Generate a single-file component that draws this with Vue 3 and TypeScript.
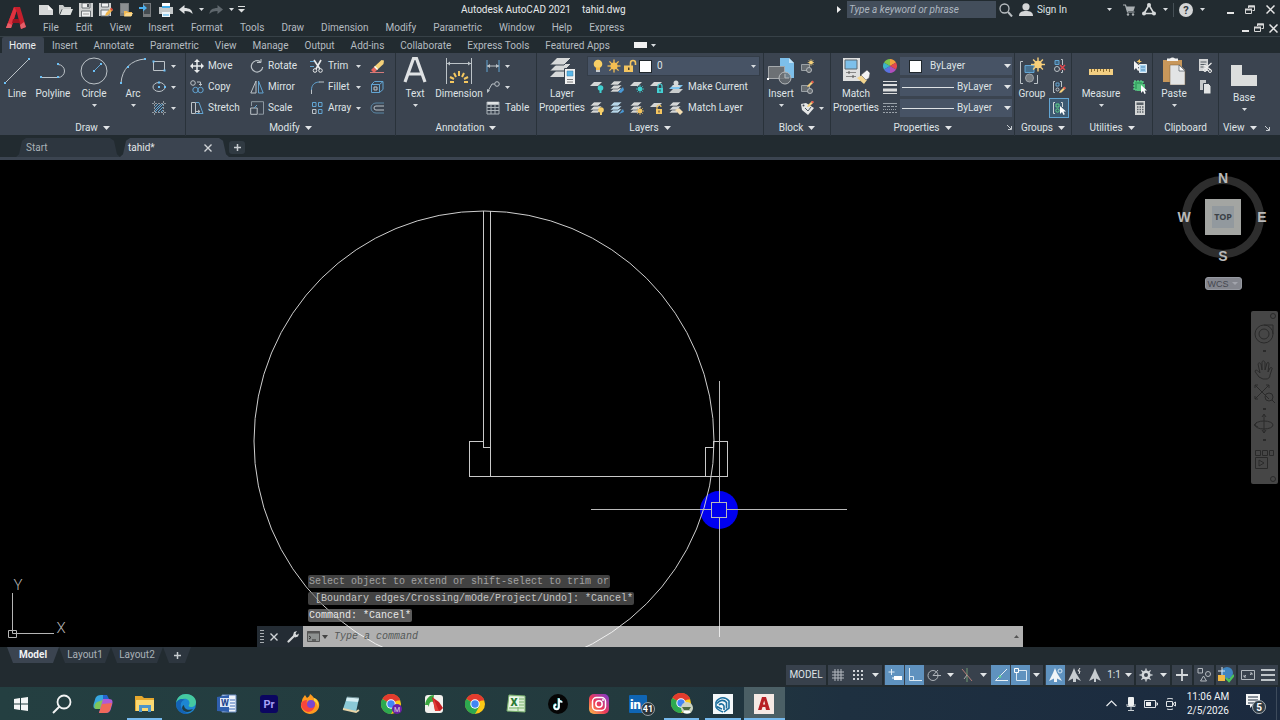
<script setup lang="ts">
import { h, ref } from 'vue'

const L = '#bcc3c8'
const B = '#62a5d3'
const dot = (x: number, y: number) => `<rect x="${x - 1}" y="${y - 1}" width="2" height="2" fill="#6cc0f5"/>`
const sheet = (x: number, y: number, c = '#d4d6d6') => `<path d="M${x + 4} ${y}h8l-4 4h-8z" fill="${c}"/>`
const stack = (c = '#d4d6d6') => `<g stroke="#3b444f" stroke-width=".6">${sheet(0, 8, c)}${sheet(0, 5, c)}${sheet(0, 1, c)}</g>`
const bulb = (x: number, y: number, c: string) => `<circle cx="${x}" cy="${y}" r="2.8" fill="${c}"/><path d="M${x - 1} ${y + 2}h2v3h-2z" fill="${c}"/>`
const padlock = (x: number, y: number, c: string, open = false) =>
  `<path d="M${x + 1} ${y + 3}v-2a2 2 0 0 1 4 0v${open ? 0 : 2}" fill="none" stroke="${c}" stroke-width="1.2"/><rect x="${x}" y="${y + 3}" width="6" height="5" fill="${c}"/><rect x="${x + 2.5}" y="${y + 4.5}" width="1" height="2" fill="#333"/>`
const rays = (x: number, y: number, r: number, c: string) => {
  let s = `<circle cx="${x}" cy="${y}" r="${r * 0.55}" fill="${c}"/>`
  for (let i = 0; i < 8; i++) {
    const a = (i * Math.PI) / 4
    s += `<path d="M${x} ${y}L${(x + r * Math.cos(a)).toFixed(1)} ${(y + r * Math.sin(a)).toFixed(1)}" stroke="${c}" stroke-width="${(r / 5).toFixed(1)}"/>`
  }
  return s
}
const pencil = (x: number, y: number) => `<path d="M${x} ${y + 6}l1-2 4-4 1.500 1.500-4 4z" fill="#f3cf7d"/><path d="M${x + 4} ${y + 1}l1.500-1.500 1.500 1.500-1.500 1.500z" fill="#e65a4d"/>`
const chrome = `<circle cx="10" cy="10" r="10" fill="#fbc916"/><path d="M10 10L1.300 5A10 10 0 0 1 18.700 5z" fill="#e33b2e"/><path d="M10 10L1.300 5A10 10 0 0 0 10 20l4.500-8z" fill="#2da94f"/><path d="M10 5.500h8.900" stroke="#e33b2e" stroke-width="2"/><circle cx="10" cy="10" r="4.700" fill="#fff"/><circle cx="10" cy="10" r="3.700" fill="#4285f4"/>`

const icons: Record<string, [number, number, string]> = {
  logo: [22, 26, '<path d="M1 23L9 2h6l6 20-5 2-1.500-6H8L6 23z" fill="#c51f2c"/><path d="M9 14l2.500-8 2 8z" fill="#212a2f"/><path d="M1 23L9 2l2.500 4L6 23z" fill="#e0323f"/><path d="M8 14h6l1 4H7z" fill="#9c1421"/><path d="M1 23l2-5 4 2-1 3zM15 20l4-3 2 5-5 2z" fill="#e4606a"/>'],
  caret: [5, 3, '<path d="M0 0h5L2.500 3z" fill="#d8dcdf"/>'],
  caretBig: [7, 4, '<path d="M0 0h7L3.500 4z" fill="#e2e5e7"/>'],
  newFile: [14, 12, '<path d="M0 1h9l5 5v5H0z" fill="#d6d8d8"/><path d="M9 1v5h5z" fill="#f5f5f5"/>'],
  open: [14, 12, '<path d="M0 1h4l1.500 2H12v2H3L0 11z" fill="#c9cccb"/><path d="M3.500 5H14l-2.500 6H1z" fill="#dfe1e0"/>'],
  save: [14, 14, '<path d="M0 0h14v14H0z" fill="#cfd1d1"/><path d="M3 0h8v5H3zM2.500 8h9v6h-9z" fill="#f0f1f1" stroke="#6b7074"/><path d="M8 1h2v3H8z" fill="#565b5f"/><path d="M4 11h6" stroke="#999"/>'],
  saveAs: [14, 14, '<path d="M0 0h12v13H0z" fill="#cfd1d1"/><path d="M2.500 0h7v4h-7zM2 7h8v6H2z" fill="#f0f1f1" stroke="#6b7074"/><path d="M6 13l1-3 5-5 2 2-5 5z" fill="#f0b64c"/><path d="M11 6l1.500-1.500L14 6.500 13 8z" fill="#d8463c"/>'],
  device: [14, 14, '<path d="M1 0h9v13H1z" fill="#777b7e"/><path d="M2 1h7v9H2z" fill="#8b8f91"/><path d="M5 8h3l1 1h4v4H5z" fill="#f1b955"/><path d="M7 10h7l-2 3.500H5z" fill="#fbd98d"/>'],
  cloud: [14, 14, '<path d="M4 0h8v14H4z" fill="#777b7e"/><path d="M5 1h6v10H5z" fill="#444b50"/><path d="M0 4h4V1.500L8 5 4 8.500V6H0z" fill="#4cb0ee"/>'],
  print: [14, 14, '<path d="M3 0h8v4H3z" fill="#fff"/><path d="M0 4h14v7H0z" fill="#c4c8c9"/><path d="M3 3h8v2H3z" fill="#40a9e6"/><path d="M3 9h8v5H3z" fill="#eef6fa"/><path d="M4 12h6" stroke="#40a9e6"/>'],
  undo: [14, 10, '<path d="M0 4.500L5.500 0v3c5 0 8 2 8 6-1.500-2-4-3-8-3v3z" fill="#dfe1e2"/>'],
  redo: [14, 10, '<path d="M14 4.500L8.500 0v3c-5 0-8 2-8 6 1.500-2 4-3 8-3v3z" fill="#5f676d"/>'],
  custom: [7, 7, '<path d="M0 .5h7" stroke="#dfe1e2"/><path d="M0 3h7L3.500 6.500z" fill="#dfe1e2"/>'],
  arrowR: [4, 7, '<path d="M0 0v7l4-3.500z" fill="#eee"/>'],
  magnify: [14, 14, '<circle cx="5.500" cy="5.500" r="4.500" fill="none" stroke="#b8bdc0" stroke-width="1.300"/><path d="M9 9l4 4.500" stroke="#b8bdc0" stroke-width="2"/>'],
  person: [14, 13, '<circle cx="7" cy="3.800" r="3.600" fill="#d4d6d7"/><path d="M0 13c0-4 3-5 7-5s7 1 7 5z" fill="#d4d6d7"/>'],
  cart: [13, 12, '<path d="M0 1h2.500l2 7h7" fill="none" stroke="#a9afb2" stroke-width="1.200"/><path d="M3 2.500h9L10.500 7H4.200z" fill="#a9afb2"/><circle cx="5" cy="10.500" r="1.200" fill="#a9afb2"/><circle cx="10" cy="10.500" r="1.200" fill="#a9afb2"/>'],
  appA: [14, 13, '<path d="M7 2L2 10.500h10z" fill="none" stroke="#d7dadb" stroke-width="1.600"/><circle cx="7" cy="2" r="2" fill="#d7dadb"/><circle cx="2" cy="10.500" r="2" fill="#d7dadb"/><circle cx="12" cy="10.500" r="2" fill="#d7dadb"/>'],
  help: [14, 14, '<circle cx="7" cy="7" r="7" fill="#d3d5d6"/><text x="7" y="11" text-anchor="middle" font-family="Roboto" font-weight="700" font-size="11" fill="#30383d">?</text>'],
  min: [7, 8, '<path d="M0 7h7" stroke="#e6e6e6" stroke-width="2"/>'],
  restore: [10, 10, '<path d="M3.500 3V1h6v4.500h-2" fill="none" stroke="#d8d8d8"/><path d="M3 1.500h7" stroke="#d8d8d8" stroke-width="2"/><path d="M.5 4.500h6v4h-6z" fill="none" stroke="#d8d8d8"/><path d="M0 4.500h7" stroke="#d8d8d8" stroke-width="2"/>'],
  close: [9, 9, '<path d="M.5.5l8 8m0-8l-8 8" stroke="#e6e6e6" stroke-width="1.500"/>'],
  closeSm: [8, 8, '<path d="M.5.5l7 7m0-7l-7 7" stroke="#d0d4d7" stroke-width="1.400"/>'],
  plus: [7, 7, '<path d="M3.500 0v7M0 3.500h7" stroke="#c7ccd0" stroke-width="1.500"/>'],
  line: [28, 28, `<path d="M1.500 26.500l25-25" stroke="${L}"/>${dot(2, 26)}${dot(26, 2)}`],
  polyline: [28, 28, `<path d="M2 20.500h17a6.500 6.500 0 0 0 0-13" fill="none" stroke="${L}"/>${dot(2, 20)}${dot(19, 20)}${dot(19, 7)}`],
  circle: [28, 28, `<circle cx="14" cy="14" r="13" fill="none" stroke="${L}"/><path d="M14 14l7-7" stroke="${B}"/>${dot(14, 14)}${dot(21, 7)}`],
  arc: [28, 28, `<path d="M2 26C3 12 12 3 26 2" fill="none" stroke="${L}"/>${dot(2, 26)}${dot(9, 10)}${dot(26, 2)}`],
  rect: [14, 14, `<path d="M1.500 2.500h11v9h-11z" fill="none" stroke="${L}"/>${dot(1.5, 2.5)}${dot(12.5, 11.5)}`],
  ellipse: [14, 14, `<ellipse cx="7" cy="7" rx="6" ry="4.500" fill="none" stroke="${L}"/>${dot(7, 7)}${dot(13, 7)}${dot(7, 2.5)}`],
  hatch: [14, 14, `<path d="M2.500 0v14M11.500 0v14M0 2.500h14M0 11.500h14" stroke="#8f989f" stroke-dasharray="2 1"/><path d="M3 6l3-3M3 9l6-6M3 11l8-8M6 11l5-5M9 11l2-2" stroke="${B}"/>`],
  move: [14, 14, '<path d="M7 1v12M1 7h12" stroke="#e8eaeb" stroke-width="1.500"/><path d="M7 0l3 3H4zM7 14l3-3H4zM0 7l3-3v6zM14 7l-3-3v6z" fill="#e8eaeb"/>'],
  copy: [14, 14, `<circle cx="3" cy="3" r="2.300" fill="none" stroke="${L}"/><path d="M7 2h3.500v3M9 4l1.500 1.500L12 4" fill="none" stroke="${L}"/><circle cx="5.500" cy="10" r="2.700" fill="none" stroke="${B}"/><circle cx="10.500" cy="10" r="2.700" fill="none" stroke="${B}"/>`],
  stretch: [14, 14, `<path d="M1.500 1.500h4v11h-4z" fill="none" stroke="${L}"/><path d="M6 1.500h3l4 11H6" fill="none" stroke="${B}"/><path d="M5 10.500h5M8 9l2 1.500L8 12" fill="none" stroke="${L}"/>`],
  rotate: [14, 14, `<path d="M10.500 2.800A5.700 5.700 0 1 0 12.700 8" fill="none" stroke="${L}" stroke-width="1.200"/><path d="M7 3.500h4V0" fill="none" stroke="${L}"/>`],
  mirror: [14, 14, `<path d="M6 1v12H.8z" fill="none" stroke="${L}"/><path d="M8.500 1v12h4.700z" fill="none" stroke="${B}"/>`],
  scale: [14, 14, `<path d="M1.500 5V.7h12v12.500H8.500" fill="none" stroke="#8d98a1"/><path d="M.7 7h6.500v6.300H.7z" fill="none" stroke="${L}"/><path d="M4 7l3-3" stroke="${B}"/>`],
  trim: [14, 14, '<path d="M0 2.500h4M0 7.500h4" stroke="#62a5d3"/><path d="M4 1l6 9M11 1L6 10" stroke="#e8eaeb" stroke-width="1.600"/><circle cx="5" cy="11.500" r="1.800" fill="none" stroke="#e8eaeb"/><circle cx="10.500" cy="11.500" r="1.800" fill="none" stroke="#e8eaeb"/>'],
  fillet: [14, 14, `<path d="M1.500 14V9" stroke="${L}"/><path d="M1.500 10c0-5 3-8 8-8" fill="none" stroke="${B}"/><path d="M9 2h5" stroke="${L}"/>`],
  array: [14, 14, `<g fill="none" stroke="${B}"><path d="M2.500 1.500h3.500v4H2.500zM8.500 1.500H12v4H8.500zM8.500 8.500H12v4H8.500z"/><path d="M2.500 8.500h3.500v4H2.500z" stroke="${L}"/></g>`],
  erase: [14, 14, '<path d="M0 13.500h14" stroke="#d47b7b"/><path d="M4 8L11.500 1 14 1.500 13.500 5 7 11z" fill="#f4d179"/><path d="M1 11l3-3 3 3-2 2H3z" fill="#e5655d"/><path d="M4 8l3 3 1-1-3-3z" fill="#fff"/>'],
  explode: [14, 14, '<path d="M1.500 4.500h8v8h-8zM1.500 4.500l3-3h8.500l-3.500 3M13 1.500v8l-3.500 3" fill="none" stroke="#62a5d3"/><path d="M4 7h3v3H4z" fill="none" stroke="#bcc3c8"/>'],
  offset: [14, 14, '<path d="M14 2H6a5 5 0 0 0 0 10h8" fill="none" stroke="#5b87a5"/><path d="M14 5H6a2 2 0 0 0 0 4h8" fill="none" stroke="#bcc3c8"/>'],
  text: [24, 26, '<path d="M2 25L10.500 1.500h3L22 25M5.500 17h13" fill="none" stroke="#dfe2e4" stroke-width="3.200"/>'],
  dimension: [28, 28, '<path d="M1.500 1v26M26.500 1v26M1.500 6.500h25" stroke="#bcc3c8"/><path d="M2 6.500l3-2v4zM26 6.500l-3-2v4z" fill="#bcc3c8"/><g stroke="#f4c760" stroke-width="2"><path d="M14 14v5M9 16l2 4M19 16l-2 4M5 20l4 2M23 20l-4 2M5 25h4M23 25h-4"/></g>'],
  dimLinear: [14, 14, '<path d="M1 1v12M13 1v12" stroke="#62a5d3"/><path d="M1 7h12" stroke="#bcc3c8"/><path d="M1 7l3-2v4zM13 7l-3-2v4z" fill="#bcc3c8"/>'],
  leader: [14, 14, '<circle cx="11" cy="4" r="2.300" fill="none" stroke="#bcc3c8"/><path d="M8.500 4H6l-4.500 8" fill="none" stroke="#bcc3c8"/><path d="M1 13v-4l3 1.500z" fill="#bcc3c8"/>'],
  table: [14, 14, '<path d="M1 1.500h12M1 3h12" stroke="#e0e3e5" stroke-width="1.500"/><path d="M1 1v12h12V1M1 6.500h12M1 9.500h12M5 4v9M9 4v9" fill="none" stroke="#aab2b8"/>'],
  layerProps: [28, 28, '<g fill="#d7d9d9"><path d="M9 1h14l-7 7H2zM9 7h14l-7 7H2z"/><path d="M9 13h14l-7 7H2z"/></g><path d="M2 8h14l7-7M2 14h14l7-7" fill="none" stroke="#3b444f"/><path d="M16.500 11.500h11v16h-11z" fill="#f1f1f1" stroke="#3b444f"/><path d="M19 14h6v5h-6z" fill="#5ab7e9" stroke="#3b7fa3" stroke-width=".5"/><path d="M19 22.500h6M19 25h6" stroke="#777"/>'],
  bulbOn: [14, 14, '<circle cx="7" cy="5" r="4.300" fill="#f8cf66"/><path d="M5 8.500h4V11H5z" fill="#f3ba45"/><path d="M5 12h4" stroke="#c8ccd0" stroke-width="2"/>'],
  sun: [14, 14, rays(7, 7, 6.5, '#f4bf52')],
  unlock: [14, 14, '<path d="M7.500 7V4a2.500 2.500 0 0 1 5 0v2" fill="none" stroke="#f4c560" stroke-width="1.600"/><path d="M1 6.500h9V13H1z" fill="#f4c560"/><path d="M5 8.500h1.500v2.500H5z" fill="#453c2b"/>'],
  layA: [14, 14, sheet(0, 2) + bulb(10.5, 8, '#40cfd0')],
  layB: [14, 14, stack() + '<path d="M8 12l5-5 1 3-3 3z" fill="#4a9ad6"/>'],
  layC: [14, 14, sheet(0, 2) + rays(10, 9, 4, '#40cfd0')],
  layD: [14, 14, sheet(0, 2) + padlock(7, 5, '#44d0d4')],
  layE: [14, 14, '<path d="M4 5h10l-4 4H0z" fill="#7fc4ee"/><path d="M4 9h10l-4 4H0z" fill="#c9cccc"/><circle cx="7" cy="3" r="2.500" fill="#d7d9d9"/><path d="M3 7a4 2.500 0 0 1 8 0z" fill="#d7d9d9"/>'],
  layF: [14, 14, stack() + bulb(11, 9, '#f7cf69')],
  layG: [14, 14, stack('#b7d6e8') + '<path d="M9 13l4-5 1 3z" fill="#4a9ad6"/>'],
  layH: [14, 14, stack() + rays(10, 10, 4, '#f4c560')],
  layI: [14, 14, sheet(0, 2) + padlock(6, 5, '#f4c560', true)],
  layJ: [14, 14, stack() + '<path d="M6 9l4-2 4 4-3 3z" fill="#f3ddb1"/>'],
  insert: [28, 28, '<path d="M13 1h9l5 5v15H13z" fill="#7dbfea"/><path d="M22 1v5h5z" fill="#c4e4f8"/><path d="M1.500 9.500h16v12h-16z" fill="#6c7074" stroke="#a5a9ac"/><circle cx="18" cy="21" r="6" fill="#6c7074" fill-opacity=".8" stroke="#b5b9bc"/><path d="M18 17v4h4" fill="none" stroke="#b5b9bc"/><path d="M0 21h2v2H0z" fill="#fff"/>'],
  blkNew: [14, 14, '<path d="M1.500 5.500h8v6h-8z" fill="#666c71" stroke="#9aa1a6"/><circle cx="9" cy="11" r="2.500" fill="#666c71" stroke="#b5b9bc"/>' + rays(11, 3.5, 3.3, '#f6d27d')],
  blkEdit: [14, 14, '<path d="M1.500 5.500h8v6h-8z" fill="#666c71" stroke="#9aa1a6"/><circle cx="10" cy="11" r="2.500" fill="#666c71" stroke="#b5b9bc"/>' + pencil(7, 1)],
  blkAttr: [14, 14, '<path d="M1 3l5-1 8 5-6 7-6-5z" fill="#e4e6e6"/><path d="M5 7l3 3 3-4" fill="none" stroke="#4e5861"/><circle cx="3.500" cy="4.500" r="1" fill="#3b4450"/>' + pencil(7, 0)],
  match: [28, 28, '<path d="M1 1h17v23H1z" fill="#dfe0e0"/><path d="M3 3h12v9H3z" fill="#7dc0ea" stroke="#5d666c"/><path d="M4 15.500h10M4 19.500h10" stroke="#888"/><path d="M7 14v3M11 18v3" stroke="#555"/><path d="M15 21l5-3 5 5-3 4z" fill="#f3d58f"/><path d="M19 18l6-5 3 3-1 5-3 2z" fill="#f3f3f3" stroke="#555" stroke-width=".5"/>'],
  wheel: [14, 14, '<path d="M7 7V0A7 7 0 0 1 13 3.500z" fill="#f2a03c"/><path d="M7 7l6-3.500A7 7 0 0 1 13 10.500z" fill="#e5484e"/><path d="M7 7l6 3.500A7 7 0 0 1 7 14z" fill="#b04fbd"/><path d="M7 7v7A7 7 0 0 1 1 10.500z" fill="#5b72e0"/><path d="M7 7l-6 3.500A7 7 0 0 1 1 3.500z" fill="#3bb4c9"/><path d="M7 7L1 3.500A7 7 0 0 1 7 0z" fill="#7ec54b"/>'],
  weights: [14, 14, '<path d="M0 1.500h14" stroke="#ddd"/><path d="M0 5h14" stroke="#ddd" stroke-width="2"/><path d="M0 10h14" stroke="#ddd" stroke-width="3"/><path d="M0 13.500h14" stroke="#ddd"/>'],
  types: [14, 14, '<path d="M0 2.500h14" stroke="#9aa2a9"/><path d="M0 5.500h14" stroke="#9aa2a9" stroke-dasharray="3 1"/><path d="M0 8.500h14" stroke="#9aa2a9" stroke-dasharray="1 1"/><path d="M0 11.500h14" stroke="#9aa2a9" stroke-dasharray="2 1"/>'],
  launch: [5, 5, '<path d="M0 0l4 4M4.500 1v3.500H1" fill="none" stroke="#c6cbcf"/>'],
  group: [28, 28, `<path d="M5 4.500H2.500v22H5M16 26.500h3.500V18" fill="none" stroke="${L}"/><path d="M7 8.500h9v7H7z" fill="#47708f" stroke="#62a5d3"/><circle cx="11.500" cy="21" r="4" fill="#777d82" stroke="#9da3a8"/>${rays(20, 7.5, 7, '#f8cf7a')}`],
  ungroup: [14, 14, `<path d="M3 1.500h4v4H3z" fill="#3f6582" stroke="#62a5d3"/><circle cx="5" cy="10" r="2.500" fill="none" stroke="${L}"/><path d="M9 .5h1.500V6M9 13.500h1.500V11" fill="none" stroke="${L}"/><path d="M8 6l5 5m0-5l-5 5" stroke="#e4474f" stroke-width="1.500"/>`],
  groupEdit: [14, 14, `<path d="M3 1.500H1.500v11H3M8 1.500h1.500V7" fill="none" stroke="${L}"/><path d="M4 3h3v3H4z" fill="none" stroke="#62a5d3"/><circle cx="5.500" cy="9.500" r="1.500" fill="none" stroke="${L}"/>${pencil(7, 7)}`],
  groupSel: [14, 14, '<path d="M3 1.500H1.500v11H3M9 1.500h1.500V6" fill="none" stroke="#cfd6d8"/><path d="M4 3h3v3H4z" fill="none" stroke="#5fd48b"/><circle cx="5.500" cy="9.500" r="1.700" fill="none" stroke="#5fd48b"/><path d="M8 5v8l2-2 1.500 3 1.300-.7L11.500 10.500H14z" fill="#fff"/>'],
  ruler: [26, 28, '<path d="M1 12h24v6H1z" fill="#f3cf82"/><path d="M3.500 12v3M6.500 12v2M9.500 12v3M12.500 12v2M15.500 12v3M18.500 12v2M21.500 12v3" stroke="#8a6b2d"/>'],
  quickSel: [14, 14, '<path d="M1 2v9l2-2 2 3 1.500-1L5 8h3z" fill="#f2f2f2"/><path d="M7 0L3.500 3H6L5 5l4-3H7z" fill="#f4c560"/><path d="M6.500 5.500h7v8h-7z" fill="#a8d4f2" stroke="#e6eef3"/><path d="M8 8h4M8 11h4" stroke="#4e8ab5"/>'],
  selAll: [14, 14, '<path d="M1 1h9v9H1z" fill="#3ba766" stroke="#6be79a" stroke-dasharray="2 1"/><path d="M4 4h8v7H4z" fill="#54c27e"/><path d="M8 5v8l2-2 1.500 3 1.300-.7-1.300-2.800H14z" fill="#fff"/>'],
  calc: [14, 14, '<path d="M2 0h10v14H2z" fill="#d4d6d6"/><path d="M3.500 1.500h7v2.500h-7z" fill="#596168"/><path d="M4 6h6.500M4 8.500h6.500M4 11h6.500" stroke="#596168" stroke-width="1.500" stroke-dasharray="1.500 1"/>'],
  paste: [28, 28, '<path d="M3 3h19v22H3z" fill="#c8975a"/><path d="M7 4V1.500h3a3 2 0 0 1 5 0h3V4z" fill="#f1f1f1"/><path d="M10 8h10l5 5v15H10z" fill="#e2e4e5" stroke="#7b5d3a" stroke-width=".5"/><path d="M19 8v6h6z" fill="#fff" stroke="#4b545c" stroke-width=".7"/>'],
  cut: [14, 14, '<path d="M1 0h9v12H1z" fill="#d3d5d6"/><path d="M2.500 3h6M2.500 5.500h5M2.500 8h3" stroke="#555d64"/><path d="M13.500 4L7 10M6 6l7 5" stroke="#eee" stroke-width="1.200"/><circle cx="7" cy="11" r="1.500" fill="none" stroke="#eee"/><circle cx="12" cy="12" r="1.500" fill="none" stroke="#eee"/>'],
  copyClip: [14, 14, '<path d="M2 0h6v10H2z" fill="#c6c9ca"/><path d="M5.500 3.500h5l2.500 2.500v8H5.500z" fill="#e2e4e4" stroke="#3b444f"/>'],
  base: [28, 28, '<path d="M1 4h11v10h15v11H1z" fill="#dcdedd"/>'],
  wrench: [12, 12, '<path d="M1.500 10.500L7 5" stroke="#d6d9da" stroke-width="2.200" stroke-linecap="round"/><path d="M6 4.500L7 1l3-1-1.500 2.500L9.500 4 12 2.500 11 5.500 8 6.500z" fill="#d6d9da"/>'],
  prompt: [14, 12, '<path d="M.5.5h12v10H.5z" fill="#8d9190" stroke="#555"/><path d="M0 1.500h13" stroke="#555" stroke-width="2"/><path d="M2 5l2 1.500L2 8M5 9h4" fill="none" stroke="#333"/>'],
  caretDark: [6, 4, '<path d="M0 0h6L3 4z" fill="#444"/>'],
  caretUp: [5, 3, '<path d="M0 3h5L2.500 0z" fill="#555"/>'],
  grid: [14, 14, '<path d="M4 1v12M7 1v12M10 1v12M1 4h12M1 7h12M1 10h12" stroke="#b4bac0"/>'],
  snap: [14, 14, '<g fill="#d0d4d8"><path d="M2 2h2v2H2zM6 2h2v2H6zM10 2h2v2h-2zM2 6h2v2H2zM6 6h2v2H6zM10 6h2v2h-2zM2 10h2v2H2zM6 10h2v2H6zM10 10h2v2h-2z"/></g>'],
  dyn: [14, 14, '<path d="M3.500 1v6M.5 4h6" stroke="#e3edf5"/><path d="M6 8h8v4H6z" fill="#fff"/><path d="M4 10h2" stroke="#fff"/>'],
  ortho: [14, 14, '<path d="M1.500 0v12.500H14M1.500 8.500h4v4" fill="none" stroke="#dce9f3"/>'],
  polar: [14, 14, '<circle cx="6" cy="7.500" r="5" fill="none" stroke="#aeb4ba"/><path d="M6 7.500h8M6 7.500L11 2" stroke="#aeb4ba"/>'],
  iso: [14, 14, '<path d="M7 0v14" stroke="#6f9a72"/><path d="M2 1l10 12" stroke="#b27d76"/><path d="M7 7l-3 4" stroke="#aaa"/>'],
  track: [14, 14, '<path d="M13 1L1.500 12.500H14" fill="none" stroke="#e8f0f6"/><path d="M5 8l2 1" stroke="#5fdb8b" stroke-width="2"/>'],
  osnap: [14, 14, '<path d="M2.500 2.500h10v10h-10z" fill="none" stroke="#dce9f3"/><path d="M.5.5h4v4h-4z" fill="#6293bf" stroke="#fff"/>'],
  anno: [14, 14, '<path d="M6 0l2 5 5 8-5-2.500V14H5v-3.500L0 13l4-8z" fill="#f0f4f7"/><circle cx="11" cy="3" r="2" fill="none" stroke="#d6e6f2"/>'],
  annoB: [14, 14, '<path d="M6 0l2 5 5 8-5-2.500V14H5v-3.500L0 13l4-8z" fill="#c7ccd0"/><path d="M12 0l-2 3h2l-1 3" fill="none" stroke="#e5e5e5"/>'],
  annoC: [14, 14, '<path d="M7 0l2 5 4 8-5-2.500V14H6v-3.500L1 13l4-8z" fill="#c7ccd0"/>'],
  gear: [14, 14, rays(7, 7, 6.5, '#d4d8db') + '<circle cx="7" cy="7" r="4.500" fill="#d4d8db"/><circle cx="7" cy="7" r="2" fill="#39424c"/>'],
  plusBig: [14, 14, '<path d="M7 1v12M1 7h12" stroke="#d4d8db" stroke-width="1.800"/>'],
  shapes: [14, 14, '<path d="M1 .5h4.500V5H1zM6.500 8l3 5h-6z" fill="none" stroke="#b3b9be"/><circle cx="11" cy="6" r="2.500" fill="none" stroke="#b3b9be"/>'],
  graphics: [16, 16, '<circle cx="9" cy="6" r="6" fill="#3f84bf"/><path d="M0 8h7v6H0z" fill="#f1b944"/><path d="M4 0v8M0 4h7" stroke="#d8e7f2"/><path d="M8 11l3 3 5-6" fill="none" stroke="#4cc35b" stroke-width="2.200"/>'],
  clean: [14, 14, '<path d="M.5 2.500h13v9H.5z" fill="none" stroke="#b3b9be"/><path d="M3 9l2-2M3 7v2h2M11 5L9 7M9 5h2v2" fill="none" stroke="#b3b9be"/>'],
  burger: [14, 14, '<path d="M0 2h14M0 7h14M0 12h14" stroke="#bfc5c9" stroke-width="2"/>'],
  win: [16, 16, '<path d="M1 3l6-1v5.500H1zM8 2l7-1v6.500H8zM1 8.500h6V14l-6-1zM8 8.500h7V15l-7-1z" fill="#f4f6f6"/>'],
  find: [20, 20, '<circle cx="12" cy="8" r="6.500" fill="none" stroke="#f2f4f4" stroke-width="1.800"/><path d="M7.500 12.500L1 19" stroke="#f2f4f4" stroke-width="2"/>'],
  copilot: [20, 20, '<path d="M8 1h6l-4 14H4c-4 0-4-3-3-6l1.500-5C3.500 2 5 1 8 1z" fill="#37a7e0"/><path d="M4 8l9-3-3 10H4c-3 0-3-2-2-5z" fill="#7fc65a"/><path d="M10 5h6c4 0 4 3 3 6l-1.500 5c-1 2-2 3-5 3H6z" fill="#b05bd6"/><path d="M9 10l10-1-2 7c-1 2-2 3-5 3H6z" fill="#f0695a"/><path d="M10 1h4l2 4h-6z" fill="#2465d0"/>'],
  explorer: [20, 18, '<path d="M0 1h7l2 2h10v13H0z" fill="#e6a82e"/><path d="M1 5h18v11H1z" fill="#fbd973"/><path d="M4 10h12v7h-3v-4H7v4H4z" fill="#4d95c9"/>'],
  edge: [20, 20, '<circle cx="10" cy="10" r="10" fill="#1d86d2"/><path d="M0 9C1 3 5 0 10 0c6 0 10 4 10 8 0 3-2 5-5 5-2 0-3-1-2-2 2-4-2-7-6-6C3 5 1 7 0 9z" fill="#45c9a0"/><path d="M0 9c2-4 6-5 9-3-3 0-5 3-4 7 1 3 4 6 8 6-6 3-13-2-13-10z" fill="#1463b5"/><path d="M8 11c0 4 4 6 9 4-2 3-6 4-9 2s-2-5 0-6z" fill="#203c46"/>'],
  word: [20, 20, '<path d="M5 1h14v17H5z" fill="#eef3fa" stroke="#6d8fc4"/><path d="M0 3l12-2v17L0 17z" fill="#2f5fae"/><path d="M12 6h6M12 9h6M12 12h6M12 15h6" stroke="#3f6cb8"/><rect x="3" y="4" width="10" height="9" fill="#dce7f6"/><text x="8" y="12" text-anchor="middle" font-family="Roboto" font-size="9" font-weight="700" fill="#1d438c">W</text>'],
  pr: [20, 20, '<rect x="1" y="1" width="18" height="18" rx="3" fill="#0b0661"/><text x="10" y="14" text-anchor="middle" font-family="Roboto" font-size="11" font-weight="700" fill="#a7a0f5">Pr</text>'],
  firefox: [20, 20, '<path d="M2 7c0-3 2-4 3-6l2 3c1-1 3-2 3-4 2 1 3 3 4 4 4 1 6 5 5 9-1 4-5 7-9 7S0 16 1 10z" fill="#ff9a1f"/><path d="M1 10c1-3 3-4 6-4-1 3 0 5 3 6 3 0 4-2 5-4 1 6-3 10-7 10-4-1-7-4-7-8z" fill="#f9453b"/><circle cx="11" cy="10" r="4" fill="#7b47d0"/><path d="M14 4c4 2 5 6 4 10 0-4-2-6-4-7z" fill="#ffd73d"/>'],
  notepad: [20, 20, '<path d="M6 3l12 1-3 14-13-3z" fill="#8bc9d6"/><path d="M6 3l12 1-1 4L5 7z" fill="#d6eef2"/><path d="M2 15l13 3 3-2" fill="none" stroke="#e8d5a8" stroke-width="2"/><path d="M6 3l12 1" stroke="#6b8b91"/>'],
  chromeM: [22, 20, chrome + '<circle cx="16" cy="15" r="5" fill="#6a1fa8"/><text x="16" y="18" text-anchor="middle" font-family="Roboto" font-size="7" fill="#ddd">M</text>'],
  fan: [20, 20, '<rect x="1" y="1" width="18" height="18" rx="3" fill="#f3f1ee"/><path d="M1 11C2 4 6 1 10 1l-1 7c-2-1-4 0-4 5L4 11z" fill="#3aa63f"/><path d="M8 3l7 5 4 6-3 3-5-1z" fill="#c61f22"/><path d="M9 3l6 14h-4z" fill="#e33e36"/>'],
  chrome: [20, 20, chrome],
  excel: [20, 20, '<path d="M3 1l16 1v16L1 17z" fill="#d8ecd2" stroke="#78b06c"/><path d="M12 5h6M12 8h6M12 11h6M3 14h15M12 3v14" stroke="#7cb66f"/><path d="M3 3h10v10H3z" fill="#edf7ea"/><text x="8" y="12" text-anchor="middle" font-family="Roboto" font-size="11" font-weight="900" fill="#2b7b35">X</text>'],
  tiktok: [20, 20, '<circle cx="10" cy="10" r="10" fill="#050505"/><path d="M10.500 4v8.500a2.300 2.300 0 1 1-2.500-2.300M10.500 4c0 2 1.500 3.500 3.500 3.500" fill="none" stroke="#48d5e0" stroke-width="2"/><path d="M11 4.500V13a2.300 2.300 0 1 1-2.500-2.300M11 4.500c0 2 1.500 3.500 3.500 3.500" fill="none" stroke="#fff" stroke-width="1.700"/>'],
  insta: [20, 20, '<defs><linearGradient id="ig" x1="0" y1="1" x2="1" y2="0"><stop offset="0" stop-color="#fdc74a"/><stop offset=".45" stop-color="#ee3a57"/><stop offset="1" stop-color="#7a3bd4"/></linearGradient></defs><rect width="20" height="20" rx="5" fill="url(#ig)"/><rect x="3.500" y="3.500" width="13" height="13" rx="4" fill="none" stroke="#fff" stroke-width="1.500"/><circle cx="10" cy="10" r="3.200" fill="none" stroke="#fff" stroke-width="1.500"/><circle cx="14" cy="6" r="1" fill="#fff"/>'],
  linkedin: [30, 24, '<rect x="4" y="3" width="18" height="18" rx="1" fill="#0f65b4"/><text x="5" y="17" font-family="Roboto" font-size="13" font-weight="900" fill="#fff">in</text><circle cx="23" cy="17" r="6.500" fill="#2b3236" stroke="#9aa2a6"/><text x="23" y="20" text-anchor="middle" font-family="Roboto" font-size="9" font-weight="700" fill="#fff">41</text>'],
  chromeP: [22, 22, chrome + '<circle cx="16" cy="15" r="6" fill="#cbd3c2"/><path d="M11 14h9l-2 3h-5z" fill="#4d6b42"/><path d="M13 18h6v2h-6z" fill="#fff"/>'],
  sketchup: [20, 20, '<rect width="20" height="20" fill="#f4f8fa"/><g fill="none" stroke="#1c6f9e" stroke-width="1.600"><path d="M3 8c4-6 10-5 13-1v7l-5 4"/><path d="M4 9.500c3-4 7-4 9.500-1v6"/><path d="M6 11c2-2 4-1 5 1v4"/><path d="M3 8v5c1 2 4 4 7 5M4 12.500c2 1 3 2 5 2.500"/></g>'],
  acad: [20, 20, '<rect width="20" height="20" fill="#f5e9e4"/><path d="M4 16L8 3h4l4 13h-4l-.7-3H8.500L7.500 16z" fill="#b71f25"/><path d="M9 10.500l1.200-4 1 4z" fill="#f5e9e4"/>'],
  up: [11, 7, '<path d="M.5 6l5-5 5 5" fill="none" stroke="#e8ebee" stroke-width="1.200"/>'],
  mic: [10, 14, '<rect x="2" y="0" width="6" height="9" rx="1" fill="#eef0f1"/><path d="M1 7v2.500h8V7M5 10v3M2 13.500h6" fill="none" stroke="#c7cdd2"/>'],
  battery: [14, 10, '<path d="M.5 1.500h11v7H.5zM12 4h1.500v2H12" fill="none" stroke="#dfe3e6"/><path d="M2 3h5v4H2z" fill="#eef0f1"/>'],
  cam: [12, 12, '<path d="M1.500 3.500h6v5h-6zM7.500 6l3-2v4z" fill="none" stroke="#dfe3e6"/><path d="M2 1q3-1.500 6 0M2 11q3 1.500 6 0" fill="none" stroke="#dfe3e6"/>'],
  note: [22, 22, '<path d="M1 1h14v11H8l-3 3v-3H1z" fill="#f4f5f6"/><path d="M3 4h10M3 7h10M3 10h6" stroke="#1c2b3d"/><circle cx="14" cy="14" r="6.500" fill="#2f3b44" stroke="#a7afb5"/><text x="14" y="18" text-anchor="middle" font-family="Roboto" font-size="10" font-weight="700" fill="#fff">5</text>'],
}

const Icon = (p: { n: string }) => {
  const [w, hh, body] = icons[p.n]
  return h('svg', { width: w, height: hh, viewBox: `0 0 ${w} ${hh}`, 'aria-hidden': 'true', innerHTML: body })
}

const menus = ['File', 'Edit', 'View', 'Insert', 'Format', 'Tools', 'Draw', 'Dimension', 'Modify', 'Parametric', 'Window', 'Help', 'Express']
const tabs = ['Home', 'Insert', 'Annotate', 'Parametric', 'View', 'Manage', 'Output', 'Add-ins', 'Collaborate', 'Express Tools', 'Featured Apps']
const activeTab = ref('Home')
const quick = ['newFile', 'open', 'save', 'saveAs', 'device', 'cloud', 'print', 'undo']
const modify = [
  [['move', 'Move'], ['copy', 'Copy'], ['stretch', 'Stretch']],
  [['rotate', 'Rotate'], ['mirror', 'Mirror'], ['scale', 'Scale']],
  [['trim', 'Trim'], ['fillet', 'Fillet'], ['array', 'Array']],
]
const layerRows = [
  { icons: ['layA', 'layB', 'layC', 'layD', 'layE'], label: 'Make Current' },
  { icons: ['layF', 'layG', 'layH', 'layI', 'layJ'], label: 'Match Layer' },
]
const statusGroups = [
  ['grid', 'snap', 'v'],
  ['dyn*', 'ortho*', 'polar', 'v', 'iso', 'v', 'track*', 'osnap*', 'v'],
  ['anno*', 'annoB', 'annoC', 'scale'],
  ['gear', 'v'],
  ['plusBig'],
  ['shapes'],
  ['graphics'],
  ['clean', 'burger'],
]
const apps = [
  ['win', 'Windows'], ['find', 'Search'], ['copilot', 'Copilot'], ['explorer', 'Files'], ['edge', 'Edge'], ['word', 'Word'], ['pr', 'Premiere'],
  ['firefox', 'Firefox'], ['notepad', 'Notepad'], ['chromeM', 'Chrome'], ['fan', 'Viewer'], ['chrome', 'Chrome'], ['excel', 'Excel'],
  ['tiktok', 'TikTok'], ['insta', 'Instagram'], ['linkedin', 'LinkedIn'], ['chromeP', 'Chrome'], ['sketchup', 'SketchUp'], ['acad', 'AutoCAD'],
]
const running = ['explorer', 'chromeP', 'sketchup', 'acad']
const history = ['Select object to extend or shift-select to trim or', ' [Boundary edges/Crossing/mOde/Project/Undo]: *Cancel*', 'Command: *Cancel*']
const command = ref('')
const search = ref('')
</script>

<template>
  <div class="app">
    <header class="top">
      <button class="logo" aria-label="Application menu"><Icon n="logo" /></button>
      <div class="top-rows">
        <div class="title-row">
          <div class="quick">
            <button v-for="q in quick" :key="q" class="q" :aria-label="q"><Icon :n="q" /></button>
            <button class="q narrow" aria-label="Undo list"><Icon n="caret" /></button>
            <button class="q" aria-label="Redo"><Icon n="redo" /></button>
            <button class="q narrow" aria-label="Redo list"><Icon n="caret" /></button>
            <button class="q narrow" aria-label="Customize"><Icon n="custom" /></button>
          </div>
          <div class="title"><span>Autodesk AutoCAD 2021</span><span>tahid.dwg</span></div>
          <div class="account">
            <button class="q narrow" aria-label="Collapse search"><Icon n="arrowR" /></button>
            <input v-model="search" class="search" type="text" placeholder="Type a keyword or phrase" aria-label="Search" />
            <button class="q" aria-label="Find"><Icon n="magnify" /></button>
            <button class="signin"><Icon n="person" />Sign In</button>
            <button class="q" aria-label="Account list"><Icon n="caret" /></button>
            <button class="q" aria-label="Store"><Icon n="cart" /></button>
            <button class="q" aria-label="Apps"><Icon n="appA" /></button>
            <button class="q narrow" aria-label="Apps list"><Icon n="caret" /></button>
            <i class="sep"></i>
            <button class="q" aria-label="Help"><Icon n="help" /></button>
            <button class="q narrow" aria-label="Help list"><Icon n="caret" /></button>
            <div class="win-buttons">
              <button class="q" aria-label="Minimize"><Icon n="min" /></button>
              <button class="q" aria-label="Restore"><Icon n="restore" /></button>
              <button class="q" aria-label="Close"><Icon n="close" /></button>
            </div>
          </div>
        </div>
        <nav class="menu-row">
          <button v-for="m in menus" :key="m">{{ m }}</button>
          <div class="doc-buttons">
            <button aria-label="Minimize drawing"><Icon n="min" /></button>
            <button aria-label="Restore drawing"><Icon n="restore" /></button>
            <button aria-label="Close drawing"><Icon n="close" /></button>
          </div>
        </nav>
      </div>
    </header>

    <nav class="ribbon-tabs">
      <button v-for="t in tabs" :key="t" :class="{ on: t === activeTab }" @click="activeTab = t">{{ t }}</button>
      <button class="ribbon-toggle" aria-label="Ribbon display"><i></i><Icon n="caret" /></button>
    </nav>

    <section class="ribbon">
      <div class="panel">
        <div class="tools">
          <button class="big w34"><Icon n="line" />Line</button>
          <button class="big w38"><Icon n="polyline" />Polyline</button>
          <button class="big w44"><Icon n="circle" />Circle<Icon n="caret" class="drop" /></button>
          <button class="big w34"><Icon n="arc" />Arc<Icon n="caret" class="drop" /></button>
          <div class="col">
            <button v-for="s in ['rect', 'ellipse', 'hatch']" :key="s" class="small" :aria-label="s"><Icon :n="s" /><Icon n="caret" /></button>
          </div>
        </div>
        <h2>Draw<Icon n="caretBig" /></h2>
      </div>

      <div class="panel">
        <div class="tools modify">
          <div v-for="(c, i) in modify" :key="i" class="col w60">
            <button v-for="[n, label] in c" :key="n" class="small"><Icon :n="n" />{{ label }}<Icon v-if="i === 2" n="caret" class="end" /></button>
          </div>
          <div class="col">
            <button v-for="s in ['erase', 'explode', 'offset']" :key="s" class="small" :aria-label="s"><Icon :n="s" /></button>
          </div>
        </div>
        <h2>Modify<Icon n="caretBig" /></h2>
      </div>

      <div class="panel">
        <div class="tools">
          <button class="big w38"><Icon n="text" class="tall" />Text<Icon n="caret" class="drop" /></button>
          <button class="big w50"><Icon n="dimension" />Dimension</button>
          <div class="col">
            <button class="small" aria-label="Linear"><Icon n="dimLinear" /><Icon n="caret" /></button>
            <button class="small" aria-label="Leader"><Icon n="leader" /><Icon n="caret" /></button>
            <button class="small"><Icon n="table" />Table</button>
          </div>
        </div>
        <h2>Annotation<Icon n="caretBig" /></h2>
      </div>

      <div class="panel">
        <div class="tools">
          <button class="big w50"><Icon n="layerProps" />Layer<br />Properties</button>
          <div class="col grow">
            <label class="layer-box">
              <Icon n="bulbOn" /><Icon n="sun" /><Icon n="unlock" /><i class="swatch"></i>
              <select aria-label="Layer"><option>0</option></select>
              <Icon n="caret" />
            </label>
            <div v-for="r in layerRows" :key="r.label" class="layer-row">
              <button v-for="n in r.icons.slice(0, 4)" :key="n" class="icon20" :aria-label="n"><Icon :n="n" /></button>
              <button class="small"><Icon :n="r.icons[4]" />{{ r.label }}</button>
            </div>
          </div>
        </div>
        <h2>Layers<Icon n="caretBig" /></h2>
      </div>

      <div class="panel">
        <div class="tools">
          <button class="big w34"><Icon n="insert" />Insert<Icon n="caret" class="drop" /></button>
          <div class="col">
            <button class="small" aria-label="Create block"><Icon n="blkNew" /></button>
            <button class="small" aria-label="Edit block"><Icon n="blkEdit" /></button>
            <button class="small" aria-label="Attributes"><Icon n="blkAttr" /><Icon n="caret" /></button>
          </div>
        </div>
        <h2>Block<Icon n="caretBig" /></h2>
      </div>

      <div class="panel">
        <div class="tools">
          <button class="big w50"><Icon n="match" />Match<br />Properties</button>
          <div class="col grow props">
            <label><Icon n="wheel" /><span class="box"><i class="swatch"></i><select aria-label="Color"><option>ByLayer</option></select><Icon n="caretBig" /></span></label>
            <label><Icon n="weights" /><span class="box"><i class="rule"></i><select aria-label="Lineweight"><option>ByLayer</option></select><Icon n="caretBig" /></span></label>
            <label><Icon n="types" /><span class="box"><i class="rule"></i><select aria-label="Linetype"><option>ByLayer</option></select><Icon n="caretBig" /></span></label>
          </div>
        </div>
        <h2>Properties<Icon n="caretBig" /><button class="launcher" aria-label="Properties palette"><Icon n="launch" /></button></h2>
      </div>

      <div class="panel">
        <div class="tools">
          <button class="big w34"><Icon n="group" />Group</button>
          <div class="col">
            <button class="icon20" aria-label="Ungroup"><Icon n="ungroup" /></button>
            <button class="icon20" aria-label="Edit group"><Icon n="groupEdit" /></button>
            <button class="icon20 lit" aria-label="Group selection"><Icon n="groupSel" /></button>
          </div>
        </div>
        <h2>Groups<Icon n="caretBig" /></h2>
      </div>

      <div class="panel">
        <div class="tools">
          <button class="big w58"><Icon n="ruler" />Measure<Icon n="caret" class="drop" /></button>
          <div class="col">
            <button v-for="s in ['quickSel', 'selAll', 'calc']" :key="s" class="icon20" :aria-label="s"><Icon :n="s" /></button>
          </div>
        </div>
        <h2>Utilities<Icon n="caretBig" /></h2>
      </div>

      <div class="panel">
        <div class="tools">
          <button class="big w42"><Icon n="paste" />Paste<Icon n="caret" class="drop" /></button>
          <div class="col">
            <button class="icon20" aria-label="Cut"><Icon n="cut" /></button>
            <button class="icon20" aria-label="Copy"><Icon n="copyClip" /></button>
          </div>
        </div>
        <h2>Clipboard</h2>
      </div>

      <div class="panel">
        <div class="tools low">
          <button class="big w50"><Icon n="base" />Base<Icon n="caret" class="drop" /></button>
        </div>
        <h2 class="start">View<Icon n="caretBig" /><button class="launch-in" aria-label="View options"><Icon n="launch" /></button></h2>
      </div>
    </section>

    <nav class="doc-tabs">
      <button class="doc"><span>Start</span></button>
      <button class="doc on"><span>tahid*</span><Icon n="closeSm" /></button>
      <button class="doc-add" aria-label="New drawing"><Icon n="plus" /></button>
    </nav>

    <main class="canvas">
      <svg class="drawing" viewBox="0 160 1280 487" preserveAspectRatio="xMidYMid slice" aria-label="Drawing">
        <g fill="none" stroke="#c9c9c9" shape-rendering="crispEdges">
          <path d="M483.500 211V447.500H490.500M490.500 211V476.500M483 441.500H469.500V476.500H727.500V441.500H713.500V447.500H705.500V476" />
        </g>
        <circle cx="719" cy="510" r="19" fill="#0000f0" />
        <circle cx="484" cy="441" r="230" fill="none" stroke="#cfcfcf" />
        <g fill="none" stroke="#b9b9b9" shape-rendering="crispEdges">
          <path d="M719.500 381V502M719.500 517V637M591 509.500H711M727 509.500H847" />
          <path d="M711.500 502.500H726.500V517.500H711.500Z" />
        </g>
      </svg>

      <svg class="ucs" width="70" height="64" viewBox="0 576 70 64" aria-label="UCS">
        <path d="M12.500 593V633.500H54M8.500 630.500H16.500V637.500H8.500Z" fill="none" stroke="#b5b5b5" />
        <text x="18" y="590" class="axis">Y</text>
        <text x="61" y="633" class="axis">X</text>
      </svg>

      <div class="view-tools">
        <svg width="92" height="96" viewBox="1177 170 92 96" aria-label="View cube">
          <circle cx="1223" cy="217" r="37" fill="none" stroke="#2d2d2d" stroke-width="8" />
          <rect x="1205" y="199" width="36" height="36" fill="#a3a5a2" />
          <rect x="1212" y="206" width="22" height="22" fill="#92999e" />
          <text x="1223" y="220" class="face">TOP</text>
          <text x="1223" y="183" class="compass">N</text>
          <text x="1223" y="261" class="compass">S</text>
          <text x="1184" y="222" class="compass">W</text>
          <text x="1262" y="222" class="compass">E</text>
        </svg>
        <button class="wcs">WCS<i></i></button>
      </div>

      <div class="nav-bar">
        <svg width="27" height="173" viewBox="0 0 27 173" fill="none" stroke="#2a2a2a" aria-label="Navigation bar">
          <circle cx="22" cy="5" r="2.500" /><circle cx="22" cy="168" r="2.500" />
          <circle cx="13" cy="23" r="9" /><circle cx="13" cy="23" r="5" /><path d="M13 14h9v9" />
          <path d="M12 40h3M12 98h3M12 129h3" stroke-width="2" />
          <path d="M8 66c-2-3-4-5-4-6 1-2 3 0 5 2L7 53c1-2 2-1 3 0l1 6v-8c1-2 2-1 3 0v8l2-7c1-1 2-1 2 1l-1 8 2-4c1-1 3 0 2 1l-2 6c0 3-2 4-4 4h-3z" />
          <path d="M4 74l14 14M18 74L4 88M4 77v-3h3M15 74h3v3M4 85v3h3" /><circle cx="18" cy="86" r="4" /><path d="M21 89l3 3" />
          <path d="M13 104v18M11 106l2-3 2 3M11 119l2 3 2-3" /><ellipse cx="13" cy="114" rx="9" ry="4" /><path d="M6 111l-3 3 4 2" />
          <path d="M4.500 139.500h5v5h-5zM11.500 139.500h5v5h-5zM18.500 139.500h4v5h-4zM4.500 146.500h12v11h-12zM8 149l5 3-5 3z" />
        </svg>
      </div>

      <div class="command-area">
        <p v-for="(t, i) in history" :key="i" :class="'h' + i">{{ t }}</p>
        <div class="command">
          <div class="handle">
            <i class="grip"></i>
            <button aria-label="Close command line"><Icon n="closeSm" /></button>
            <button aria-label="Customize command line"><Icon n="wrench" /></button>
          </div>
          <label class="entry">
            <Icon n="prompt" /><Icon n="caretDark" />
            <input v-model="command" type="text" placeholder="Type a command" aria-label="Command" />
            <Icon n="caretUp" />
          </label>
        </div>
      </div>
    </main>

    <nav class="layouts">
      <button class="on">Model</button>
      <button>Layout1</button>
      <button>Layout2</button>
      <button class="add" aria-label="New layout"><Icon n="plus" /></button>
    </nav>

    <div class="status">
      <div class="group"><button class="model">MODEL</button></div>
      <div v-for="(g, i) in statusGroups" :key="i" class="group">
        <template v-for="(s, j) in g" :key="j">
          <button v-if="s === 'v'" class="sv" aria-label="More"><Icon n="caretBig" /></button>
          <button v-else-if="s === 'scale'" class="ratio">1:1<Icon n="caretBig" /></button>
          <button v-else class="si" :class="{ on: s.endsWith('*') }" :aria-label="s.replace('*', '')"><Icon :n="s.replace('*', '')" /></button>
        </template>
      </div>
    </div>

    <footer class="taskbar">
      <div class="apps">
        <button v-for="([n, label], i) in apps" :key="i" :aria-label="label" :class="{ run: running.includes(n), front: n === 'acad' }"><Icon :n="n" /></button>
      </div>
      <div class="tray">
        <button aria-label="Hidden icons"><Icon n="up" /></button>
        <button aria-label="Microphone"><Icon n="mic" /></button>
        <button aria-label="Battery"><Icon n="battery" /></button>
        <button aria-label="Camera"><Icon n="cam" /></button>
        <button class="clock">11:06 AM<br />2/5/2026</button>
        <button class="notes" aria-label="Notifications"><Icon n="note" /></button>
      </div>
    </footer>
  </div>
</template>

<style>
body {
  margin: 0;
  background: #222b30;
}
</style>

<style scoped>
.app {
  display: flex;
  flex-direction: column;
  min-height: 100vh;
  font: 10px/14px Roboto, "Liberation Sans", sans-serif;
  color: #dfe3e6;
  background: #222b30;
}
* {
  box-sizing: border-box;
}
svg {
  display: block;
  flex: none;
}
button,
input,
select {
  font: inherit;
  color: inherit;
  background: none;
  border: 0;
  padding: 0;
  margin: 0;
  min-width: 0;
  border-radius: 0;
}
button {
  display: flex;
  align-items: center;
  justify-content: center;
  white-space: nowrap;
}
select {
  appearance: none;
  outline: 0;
}
.top {
  display: flex;
  height: 37px;
  border-bottom: 1px solid #374147;
}
.logo {
  width: 36px;
  padding-right: 4px;
  flex: none;
}
.top-rows {
  flex: 1;
  min-width: 0;
}
.title-row {
  display: flex;
  align-items: center;
  height: 19px;
}
.quick {
  display: flex;
  flex: 0 0 425px;
}
.q {
  width: 20px;
  height: 18px;
}
.q.narrow {
  width: 12px;
}
.quick .narrow {
  width: 10px;
}
.title {
  display: flex;
  gap: 11px;
  white-space: nowrap;
  color: #e6e9eb;
}
.account {
  display: flex;
  align-items: center;
  margin-left: auto;
}
.search {
  width: 149px;
  height: 17px;
  margin-left: 2px;
  padding: 0 2px;
  background: #434e5b;
}
.search::placeholder {
  color: #aeb7c0;
  font-style: italic;
  opacity: 1;
}
.signin {
  gap: 4px;
  width: 50px;
  margin: 0 31px 0 2px;
}
.sep {
  width: 1px;
  height: 14px;
  margin: 0 2px;
  background: #465056;
}
.win-buttons {
  display: flex;
  margin-left: 12px;
}
.menu-row {
  display: flex;
  align-items: center;
  gap: 17px;
  height: 18px;
  padding-left: 7px;
  color: #b5bcc1;
}
.doc-buttons {
  display: flex;
  gap: 5px;
  margin-left: auto;
  padding-right: 2px;
}
.ribbon-tabs {
  display: flex;
  height: 16px;
  padding-left: 2px;
  color: #b5bcc1;
}
.ribbon-tabs button {
  padding: 2px 8px 0 7px;
}
.ribbon-tabs .on {
  padding-right: 8px;
  color: #eef0f2;
  background: #3b4450;
  border-radius: 2px 2px 0 0;
}
.ribbon-tabs button + button {
  padding-left: 8px;
}
.ribbon-tabs .ribbon-toggle {
  gap: 4px;
  margin-left: 16px;
  padding: 0;
}
.ribbon-toggle i {
  width: 13px;
  height: 6px;
  background: #f1f1f1;
}
.ribbon {
  display: grid;
  grid-template-columns: 186fr 210fr 141fr 227fr 67fr 184fr 57fr 81fr 66fr 61fr;
  height: 82px;
  background: #3b4450;
}
.panel {
  display: flex;
  flex-direction: column;
  min-width: 0;
  padding-top: 3px;
  border-right: 1px solid #29323a;
}
.panel:last-child {
  border-right: 0;
}
.tools {
  display: flex;
  flex: 1;
}
.tools.modify {
  padding-left: 2px;
}
.tools.low {
  padding-top: 4px;
}
.panel h2 {
  position: relative;
  display: flex;
  align-items: center;
  justify-content: center;
  gap: 5px;
  height: 16px;
  margin: 0;
  font-size: 10px;
  font-weight: 400;
  line-height: 16px;
}
.panel h2.start {
  justify-content: flex-start;
  padding-left: 4px;
}
.launcher {
  position: absolute;
  right: 2px;
  top: 5px;
}
.launch-in {
  margin-left: 3px;
}
.big {
  flex: none;
  flex-direction: column;
  justify-content: flex-start;
  height: 60px;
  padding-top: 1px;
  line-height: 14px;
  text-align: center;
}
.big svg:first-child {
  margin-bottom: 2px;
}
.big svg.tall {
  margin-bottom: 4px;
}
.big .drop {
  margin-top: 3px;
}
.w34 { width: 34px; }
.w38 { width: 38px; }
.w42 { width: 42px; }
.w44 { width: 44px; }
.w50 { width: 50px; }
.w58 { width: 58px; }
.w60 { width: 60px; }
.col {
  display: flex;
  flex-direction: column;
  gap: 1px;
}
.grow {
  flex: 1;
  min-width: 0;
}
.small {
  justify-content: flex-start;
  gap: 5px;
  height: 20px;
  padding-left: 2px;
}
.modify .small {
  gap: 4px;
}
.end {
  margin: 0 7px 0 auto;
}
.icon20 {
  width: 20px;
  height: 20px;
}
.lit {
  background: #3d5a72;
  border: 1px solid #62a5d3;
}
.layer-box {
  display: flex;
  align-items: center;
  gap: 2px;
  height: 20px;
  margin-right: 3px;
  padding: 0 3px;
  background: #475365;
  border: 1px solid #343d48;
}
.layer-box select {
  flex: 1;
  padding-left: 3px;
}
.swatch {
  flex: none;
  width: 13px;
  height: 13px;
  background: #fff;
  border: 1px solid #20272c;
}
.layer-row {
  display: flex;
}
.props label {
  display: flex;
  align-items: center;
  gap: 3px;
  height: 20px;
  padding-left: 2px;
}
.props {
  padding-right: 2px;
}
.box {
  display: flex;
  flex: 1;
  align-items: center;
  gap: 3px;
  height: 18px;
  min-width: 0;
  padding: 0 1px 0 2px;
  background: #475365;
}
.box select {
  flex: 1;
}
.box .swatch {
  margin: 0 5px 0 7px;
}
.rule {
  flex: 0 0 52px;
  height: 1px;
  background: #dde1e4;
}
.doc-tabs {
  display: flex;
  align-items: flex-end;
  height: 25px;
  padding-left: 16px;
  border-bottom: 3px solid #3b4450;
}
.doc {
  justify-content: space-between;
  width: 104px;
  height: 19px;
  padding: 0 16px 0 10px;
  color: #aab2b8;
  background: #2d363f;
  clip-path: polygon(0 100%, 3px 85%, 6px 15%, 10px 0, calc(100% - 10px) 0, calc(100% - 6px) 15%, calc(100% - 3px) 85%, 100% 100%);
}
.doc.on {
  width: 109px;
  padding: 0 17px 0 8px;
  color: #e3e6e8;
  background: #3b4450;
}
.doc-add {
  width: 16px;
  height: 13px;
  margin: 0 0 3px;
  background: #303a42;
  border-radius: 3px;
}
.canvas {
  position: relative;
  flex: 1;
  min-height: 320px;
  overflow: hidden;
  background: #000;
}
.drawing {
  position: absolute;
  inset: 0;
  width: 100%;
  height: 100%;
}
.ucs {
  position: absolute;
  left: 0;
  bottom: 7px;
}
.axis {
  font: 300 15px Roboto, sans-serif;
  fill: #b5b5b5;
  text-anchor: middle;
}
.view-tools {
  position: absolute;
  top: 10px;
  right: 11px;
  display: flex;
  flex-direction: column;
  align-items: center;
  gap: 11px;
}
.face {
  font: 700 9px "Noto Sans", sans-serif;
  fill: #3b4147;
  text-anchor: middle;
}
.compass {
  font: 700 14px "Liberation Sans", sans-serif;
  fill: #b9b9b9;
  text-anchor: middle;
}
.wcs {
  justify-content: flex-start;
  gap: 3px;
  width: 37px;
  height: 13px;
  padding-left: 2px;
  font: 9px "Liberation Sans", sans-serif;
  color: #44474f;
  background: #84868e;
  border: 1px solid #9699a1;
  border-radius: 3px;
}
.wcs i {
  border: 3px solid transparent;
  border-top-color: #a2a4ac;
  border-bottom: 0;
}
.nav-bar {
  position: absolute;
  top: 151px;
  right: 2px;
  background: #464646;
  border-radius: 2px;
}
.command-area {
  position: absolute;
  left: 257px;
  right: 257px;
  bottom: 0;
  display: flex;
  flex-direction: column;
  align-items: flex-start;
  gap: 4px;
  font: 10px/13px "Liberation Mono", monospace;
}
.command-area p {
  margin: 0 0 0 51px;
  padding: 0 1px;
  white-space: pre;
  color: #a2a2a2;
  background: rgba(110, 110, 110, 0.6);
  border-radius: 2px;
}
.command-area .h1 {
  color: #c6c6c6;
}
.command-area .h2 {
  color: #e8e8e8;
  background: rgba(130, 130, 130, 0.7);
}
.command {
  display: flex;
  align-self: stretch;
  height: 21px;
}
.handle {
  display: flex;
  align-items: center;
  width: 46px;
  padding-left: 3px;
  background: #242c34;
}
.grip {
  width: 4px;
  height: 14px;
  background: repeating-linear-gradient(#a8adb1 0 1px, transparent 1px 3px);
}
.handle button {
  width: 20px;
  padding-right: 4px;
  padding-left: 4px;
}
.entry {
  display: flex;
  flex: 1;
  align-items: center;
  gap: 1px;
  padding: 0 4px;
  background: rgba(255, 255, 255, 0.69);
}
.entry input {
  flex: 1;
  padding: 0 5px;
  font-style: italic;
  color: #333;
}
.entry input::placeholder {
  color: #555958;
  opacity: 1;
}
.layouts {
  display: flex;
  height: 18px;
  padding-left: 7px;
  color: #aab2b8;
}
.layouts button {
  width: 52px;
  height: 16px;
  background: #2d363f;
  clip-path: polygon(0 0, 100% 0, calc(100% - 6px) 100%, 6px 100%);
}
.layouts .on {
  font-weight: 700;
  color: #f0f2f3;
  background: #3b4450;
}
.layouts .add {
  width: 28px;
}
.status {
  display: flex;
  justify-content: flex-end;
  gap: 2px;
  height: 22px;
  padding-right: 2px;
}
.group {
  display: flex;
  height: 20px;
  background: #38414c;
}
.model {
  width: 40px;
}
.si {
  width: 20px;
}
.si.on {
  background: #5f92bf;
  border-left: 1px solid #38414c;
}
.sv {
  width: 14px;
}
.group:nth-child(3) .sv {
  width: 13px;
}
.ratio {
  gap: 4px;
  width: 29px;
}
.taskbar {
  display: flex;
  justify-content: space-between;
  height: 33px;
  background: linear-gradient(90deg, #243f41 0%, #233a3e 50%, #1e3040 66%, #1b2a3f 100%);
}
.apps {
  display: flex;
  flex: 0 0 785px;
}
.apps button {
  position: relative;
  flex: 1;
}
.apps .front {
  background: #4b5f65;
}
.apps .run::after {
  content: "";
  position: absolute;
  left: 3px;
  right: 3px;
  bottom: 0;
  height: 2px;
  background: #76b9ed;
}
.apps .front::after {
  left: 0;
  right: 0;
}
.tray {
  display: flex;
  margin-right: 3px;
  border-right: 1px solid #3d4b5c;
}
.tray button {
  width: 20px;
}
.tray .clock {
  width: 54px;
  color: #f0f2f4;
}
.tray .notes {
  width: 41px;
}
</style>
